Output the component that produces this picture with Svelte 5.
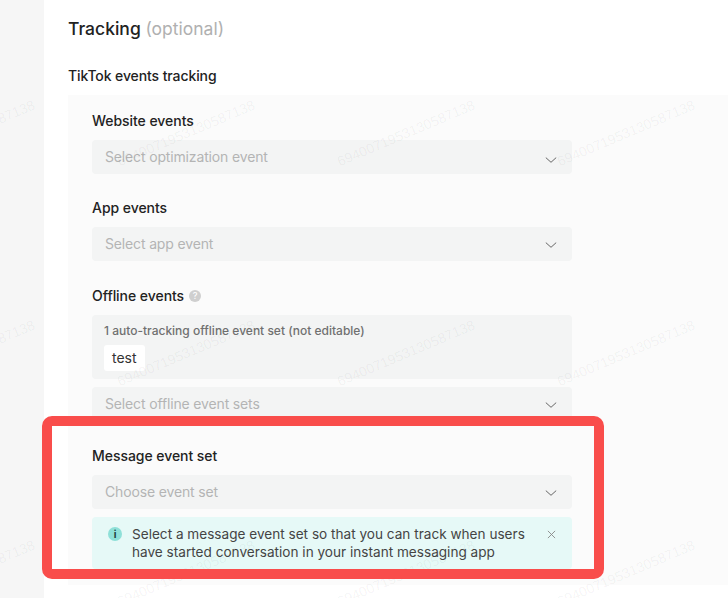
<script>
	const wm = "6940071953130587138";
	const marks = Array.from({ length: 12 }, (_, i) => i);
</script>

<div class="page">
	<aside class="rail"></aside>
	<main class="panel">
		<h2 class="title">Tracking <span class="optional">(optional)</span></h2>
		<h3 class="subtitle">TikTok events tracking</h3>

		<section class="events">
			<div class="field">
				<div class="label">Website events</div>
				<div class="select first">
					<span>Select optimization event</span>
					<svg class="chevron" viewBox="0 0 12 6"><path d="M.8.6 6 5.3 11.2.6" /></svg>
				</div>
			</div>

			<div class="field">
				<div class="label">App events</div>
				<div class="select">
					<span>Select app event</span>
					<svg class="chevron" viewBox="0 0 12 6"><path d="M.8.6 6 5.3 11.2.6" /></svg>
				</div>
			</div>

			<div class="field">
				<div class="label">
					Offline events
					<span class="help">?</span>
				</div>
				<div class="auto-box">
					<div class="auto-text">1 auto-tracking offline event set (not editable)</div>
					<span class="chip">test</span>
				</div>
				<div class="select">
					<span>Select offline event sets</span>
					<svg class="chevron" viewBox="0 0 12 6"><path d="M.8.6 6 5.3 11.2.6" /></svg>
				</div>
			</div>

			<div class="field">
				<div class="label">Message event set</div>
				<div class="select">
					<span>Choose event set</span>
					<svg class="chevron" viewBox="0 0 12 6"><path d="M.8.6 6 5.3 11.2.6" /></svg>
				</div>
				<div class="notice">
					<span class="info">i</span>
					<p>Select a message event set so that you can track when users have started conversation in your instant messaging app</p>
					<svg class="close" viewBox="0 0 10 10"><path d="M1 1l8 8M9 1l-8 8" /></svg>
				</div>
			</div>
		</section>
	</main>

	<div class="watermarks">
		{#each marks as m (m)}
			<div class="tile"><span>{wm}</span></div>
		{/each}
	</div>
	<div class="highlight"></div>
</div>

<style>
	:global(body) {
		margin: 0;
		background: #fff;
	}
	.page {
		position: relative;
		display: flex;
		width: 728px;
		height: 598px;
		overflow: hidden;
		font-family: Inter, "Liberation Sans", sans-serif;
		color: #222;
	}
	.rail {
		flex: 0 0 44px;
		background: #f6f6f6;
	}
	.panel {
		flex: 1;
		min-width: 0;
		padding: 16px 0 0 24px;
		background: #fff;
	}
	.title {
		margin: 0;
		font-size: 17.5px;
		line-height: 26px;
		font-weight: 500;
	}
	.optional {
		font-weight: 400;
		color: #b0b0b0;
	}
	.subtitle {
		margin: 24px 0 0;
		font-size: 14px;
		line-height: 20px;
		font-weight: 500;
		letter-spacing: -0.1px;
	}
	.events {
		box-sizing: border-box;
		margin-top: 9px;
		height: 490px;
		padding: 16px 24px 0;
		background: #fbfbfb;
	}
	.field {
		width: 480px;
		margin-bottom: 25px;
	}
	.field:first-child {
		margin-bottom: 24px;
	}
	.label {
		display: flex;
		align-items: center;
		gap: 5px;
		margin-bottom: 9px;
		font-size: 14px;
		line-height: 20px;
		font-weight: 500;
		letter-spacing: -0.05px;
	}
	.help {
		width: 12px;
		height: 12px;
		border-radius: 50%;
		background: #cfcfcf;
		color: #fff;
		font-size: 9px;
		line-height: 12px;
		text-align: center;
	}
	.select {
		display: flex;
		align-items: center;
		justify-content: space-between;
		height: 34px;
		padding: 0 15px 0 13px;
		border-radius: 4px;
		background: #f3f4f4;
		font-size: 14px;
		letter-spacing: -0.15px;
		color: #b4b4b4;
	}
	.select span {
		margin-top: -2px;
	}
	.chevron {
		width: 12px;
		height: 6px;
		margin-top: 2px;
		fill: none;
		stroke: #666;
		stroke-width: 1;
	}
	.first .chevron {
		margin-top: 5px;
	}
	.auto-box {
		height: 64px;
		box-sizing: border-box;
		margin-bottom: 8px;
		padding: 7px 12px 0;
		border-radius: 4px;
		background: #f3f4f4;
	}
	.auto-text {
		margin-bottom: 5px;
		font-size: 12px;
		line-height: 18px;
		font-weight: 500;
		color: #707070;
	}
	.chip {
		display: inline-block;
		padding: 0 8px;
		border-radius: 3px;
		background: #fff;
		font-size: 14px;
		line-height: 26px;
		color: #333;
	}
	.notice {
		display: flex;
		align-items: flex-start;
		margin-top: 8px;
		padding: 8px 16px;
		border-radius: 4px;
		background: #e6f9f7;
		font-size: 13.6px;
		line-height: 18px;
		color: #444;
	}
	.notice p {
		flex: 1;
		margin: 0;
	}
	.info {
		flex: 0 0 14px;
		height: 14px;
		margin: 2px 10px 0 0;
		border-radius: 50%;
		background: #8ee0d8;
		color: #1f3d3a;
		font-size: 10px;
		font-weight: 700;
		line-height: 14px;
		text-align: center;
	}
	.close {
		flex: 0 0 9px;
		width: 9px;
		height: 9px;
		margin: 5px 0 0 20px;
		fill: none;
		stroke: #888;
		stroke-width: 1;
	}
	.watermarks {
		position: absolute;
		left: -144px;
		top: 23px;
		display: grid;
		grid-template-columns: repeat(4, 220px);
		grid-auto-rows: 220px;
		pointer-events: none;
	}
	.tile {
		display: flex;
		align-items: center;
		justify-content: center;
		font-family: "Liberation Sans", Arial, sans-serif;
		font-size: 14px;
		color: rgba(0, 0, 0, 0.05);
	}
	.tile span {
		transform: rotate(-23deg);
		white-space: nowrap;
	}
	.highlight {
		position: absolute;
		left: 42px;
		top: 416px;
		box-sizing: border-box;
		width: 562px;
		height: 163px;
		border: 10px solid #f94d4b;
		border-radius: 10px;
		pointer-events: none;
	}
</style>
